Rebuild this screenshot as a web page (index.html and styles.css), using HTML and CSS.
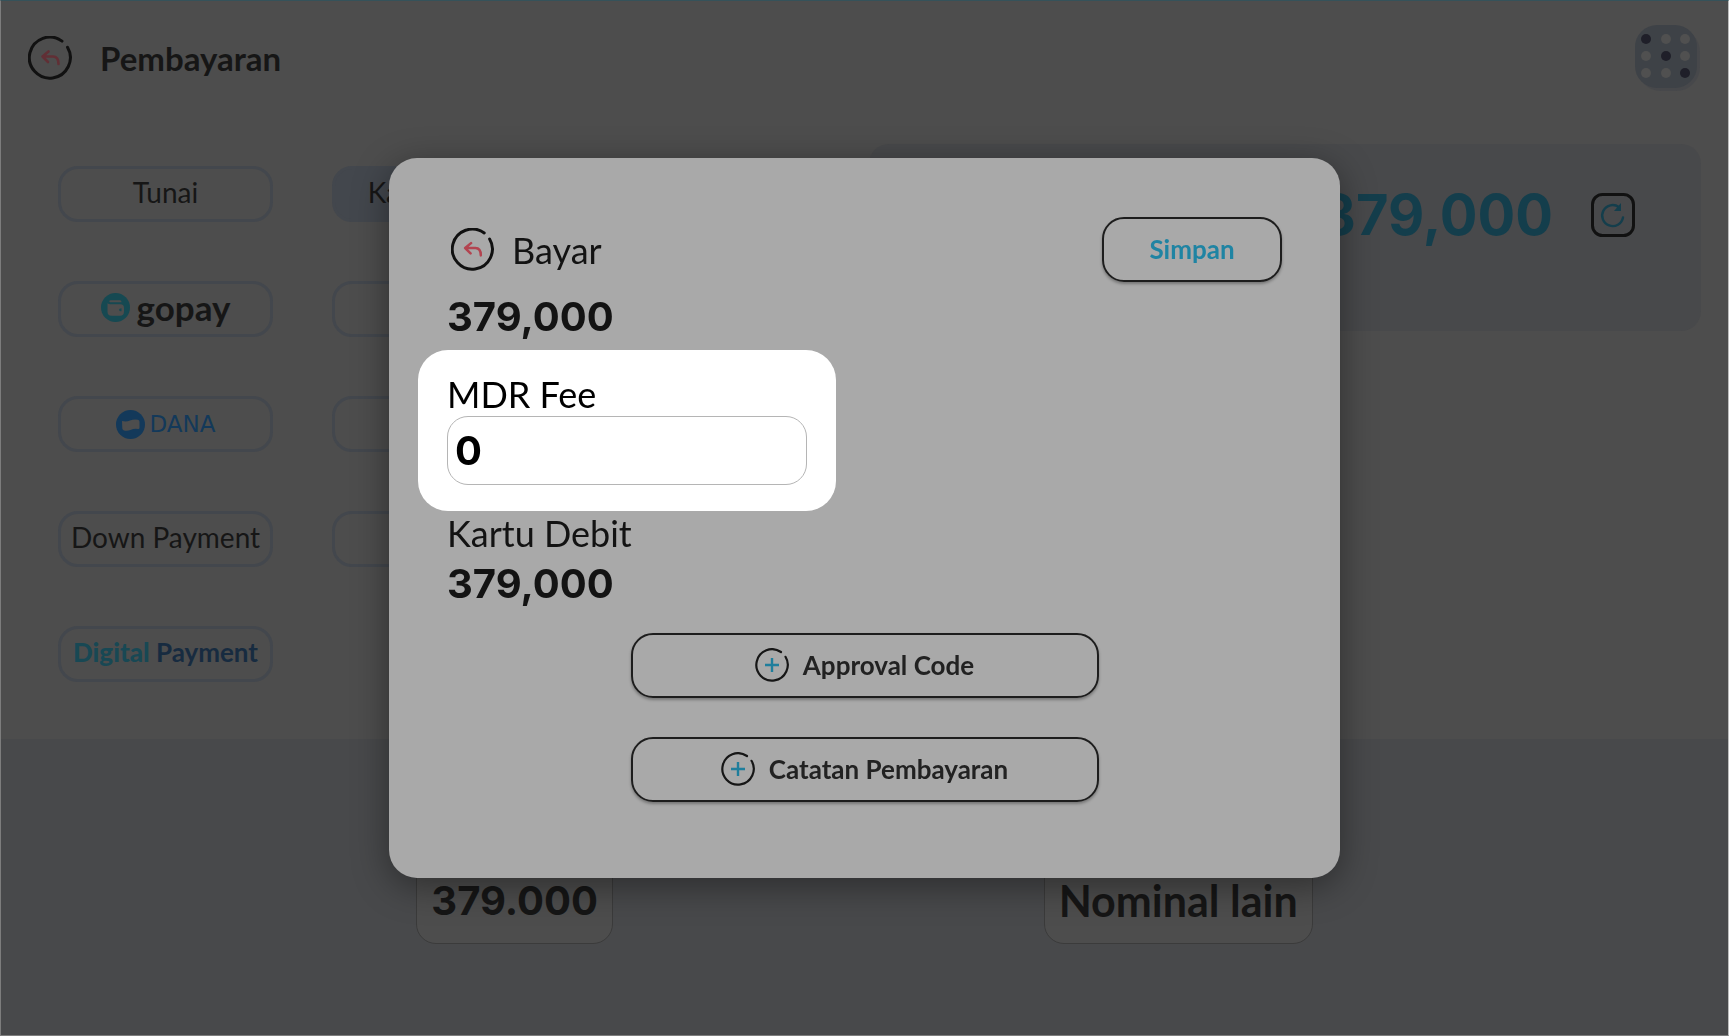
FILE: index.html
```html
<!DOCTYPE html>
<html lang="id">
<head>
  <meta charset="UTF-8">
  <meta name="viewport" content="width=device-width, initial-scale=1.0">
  <title>Pembayaran</title>
  <link rel="stylesheet" href="styles.css">
</head>
<body>

  <svg class="sprite" aria-hidden="true">
    <symbol id="icon-back" viewBox="0 0 44 44">
      <path d="M34 5.100A20.500 20.500 0 1 0 39.500 11.200" fill="none" stroke="#111" stroke-width="3" stroke-linecap="round"/>
      <path d="M20.500 15.500l-6 5 5.500 5.500M15 20.500h10q5.500 0 5.500 7.500" fill="none" stroke="currentColor" stroke-width="2.600" stroke-linecap="round" stroke-linejoin="round"/>
    </symbol>
    <symbol id="icon-plus" viewBox="0 0 34 34">
      <path d="M26 4A15.700 15.700 0 1 0 30.500 8.800" fill="none" stroke="#161616" stroke-width="2.200" stroke-linecap="round"/>
      <path d="M17 10v14M10 17h14" stroke="#1f7e9c" stroke-width="2.400"/>
    </symbol>
  </svg>

  <header class="topbar">
    <button class="icon-btn back" aria-label="Kembali"><svg><use href="#icon-back"/></svg></button>
    <h1>Pembayaran</h1>
    <button class="icon-btn apps" aria-label="Menu">
      <svg viewBox="0 0 66 66">
        <rect x="3" y="3" width="63" height="63" rx="24" fill="#47484b"/>
        <rect x="1" y="0" width="62" height="63" rx="22" fill="#3e4247"/>
        <g fill="#505050">
          <circle cx="32" cy="14" r="5"/><circle cx="51" cy="14" r="5"/>
          <circle cx="12" cy="31" r="5"/><circle cx="51" cy="31" r="5"/>
          <circle cx="12" cy="48" r="5"/><circle cx="32" cy="48" r="5"/>
        </g>
        <g fill="#1f1f29">
          <circle cx="12" cy="14" r="5"/><circle cx="32" cy="31" r="5"/><circle cx="51" cy="48" r="5"/>
        </g>
      </svg>
    </button>
  </header>

  <main class="content">
    <section class="methods">
      <button class="method">Tunai</button>
      <button class="method active">Kartu Debit</button>
      <button class="method gopay">
        <svg width="29" height="29" viewBox="0 0 29 29">
          <circle cx="14.500" cy="14.500" r="14.500" fill="#164952"/>
          <path d="M9.500 7.200h9.500q1.500 0 1.500 2H9.500q-1.200 0-1.200-1t1.200-1z" fill="#4d4d4d"/>
          <path d="M6.500 10.200q1 1 3 1h10q3.500 0 3.500 3.500v4q0 4-4 4H10.500q-4 0-4-4z" fill="#4d4d4d"/>
          <path d="M20.500 15.300q-2.500 0-2.500 1.500t2.500 1.500z" fill="#164952"/>
        </svg>
        <span>gopay</span>
      </button>
      <button class="method" aria-label="Dompet digital"></button>
      <button class="method dana">
        <svg width="29" height="29" viewBox="0 0 29 29">
          <circle cx="14.500" cy="14.500" r="14.500" fill="#13395a"/>
          <path d="M6 11q4 1.200 8-.5t8-.8q1.500.3 1.500 2v6q0 1.500-1.500 1.300-4-.6-7.500.9t-7 .3q-1-.4-1.200-1.700z" fill="#4d4d4d"/>
        </svg>
        <span>DANA</span>
      </button>
      <button class="method" aria-label="Dompet digital"></button>
      <button class="method">Down Payment</button>
      <button class="method" aria-label="Piutang"></button>
      <button class="method digital"><span><b>Digital</b> Payment</span></button>
    </section>

    <section class="summary">
      <strong>379,000</strong>
      <button class="icon-btn refresh" aria-label="Muat ulang">
        <svg viewBox="0 0 44 44">
          <rect x="1.500" y="1.500" width="41" height="41" rx="10" fill="none" stroke="#111" stroke-width="3"/>
          <path d="M28 14.200A10.500 10.500 0 1 0 32 24.500" fill="none" stroke="#143e4c" stroke-width="2.400" stroke-linecap="round"/>
          <path d="M30 10v8h-7z" fill="#143e4c"/>
        </svg>
      </button>
    </section>
  </main>

  <section class="nominals">
    <button class="nominal amount">379.000</button>
    <button class="nominal">Nominal lain</button>
  </section>

  <div class="backdrop">
    <form class="modal" role="dialog" aria-label="Bayar">
      <div class="modal-head">
        <button type="button" class="icon-btn back-small" aria-label="Kembali"><svg><use href="#icon-back"/></svg></button>
        <h2>Bayar</h2>
        <button type="submit" class="outline save">Simpan</button>
      </div>
      <p class="amount">379,000</p>

      <div class="spotlight">
        <label for="mdr">MDR Fee</label>
        <input class="amount" type="text" id="mdr" name="mdr" value="0">
      </div>

      <p class="method-name">Kartu Debit</p>
      <p class="amount">379,000</p>

      <div class="extras">
        <button type="button" class="outline"><svg><use href="#icon-plus"/></svg>Approval Code</button>
        <button type="button" class="outline"><svg><use href="#icon-plus"/></svg>Catatan Pembayaran</button>
      </div>
    </form>
  </div>

</body>
</html>
```
FILE: styles.css
```css
* {
  box-sizing: border-box;
}

body {
  margin: 0;
  min-height: 100vh;
  display: flex;
  flex-direction: column;
  font-family: Lato, sans-serif;
  color: #161616;
  background-color: #4d4d4d;
  border: 1px solid #7d7d7d;
  border-top-color: #35525a;
  border-right-color: #bdbdbd;
}

h1, h2, p {
  margin: 0;
}

button {
  font-family: inherit;
  color: inherit;
  background: none;
  border: none;
  padding: 0;
  cursor: pointer;
}

.sprite {
  position: absolute;
  width: 0;
  height: 0;
}

.icon-btn svg {
  display: block;
  width: 100%;
  height: 100%;
}

.amount {
  font-family: Inter, sans-serif;
  font-size: 40px;
  font-weight: 700;
  line-height: 50px;
}

/* topbar */
.topbar {
  display: flex;
  align-items: center;
  height: 114px;
  padding: 0 28px 0 27px;
}

.topbar h1 {
  margin-left: 28px;
  font-size: 33px;
  line-height: 40px;
}

.back {
  width: 44px;
  height: 44px;
  color: #612f35;
}

.apps {
  width: 66px;
  height: 66px;
  margin-left: auto;
}

/* metode pembayaran */
.content {
  display: grid;
  grid-template-columns: 1fr 1fr;
  align-items: start;
  flex: 1;
}

.methods {
  display: grid;
  grid-template-columns: 215px 215px;
  gap: 59px;
  padding: 51px 57px;
}

.method {
  display: flex;
  align-items: center;
  justify-content: center;
  height: 56px;
  padding-bottom: 4px;
  border: 3px solid #43474d;
  border-radius: 20px;
  font-size: 28px;
  white-space: nowrap;
}

.method.active {
  background-color: #43474d;
}

.gopay {
  gap: 7px;
  font-size: 35px;
  font-weight: 700;
}

.gopay span {
  line-height: 36px;
}

.dana {
  padding: 0;
  gap: 5px;
  font-family: "DejaVu Sans", sans-serif;
  font-size: 23px;
  color: #13395a;
}

.digital {
  font-size: 26px;
  font-weight: 700;
  color: #172b40;
}

.digital b {
  color: #184854;
}

.summary {
  display: flex;
  align-items: flex-start;
  justify-content: flex-end;
  gap: 38px;
  height: 187px;
  margin: 29px 27px 0 4px;
  padding: 49px 66px 0 0;
  border-radius: 20px;
  background-color: #48494b;
}

.summary strong {
  font-family: Inter, sans-serif;
  font-size: 56px;
  line-height: 44px;
  color: #143e4c;
}

.refresh {
  width: 44px;
  height: 44px;
}

.nominals {
  display: flex;
  align-items: flex-start;
  justify-content: space-around;
  height: 296px;
  padding: 120px 200px 0;
  background-color: #48494b;
}

.nominal {
  height: 85px;
  padding: 0 14px 2px;
  border: 1px solid #3b3b3b;
  border-radius: 20px;
  background-color: #4d4d4d;
  font-size: 43px;
  font-weight: 700;
}

.nominal.amount {
  font-size: 40px;
}

/* modal */
.backdrop {
  position: fixed;
  inset: 0;
  display: flex;
  align-items: center;
  justify-content: center;
}

.modal {
  width: 951px;
  padding: 59px 58px 76px;
  border-radius: 28px;
  background-color: #a9a9a9;
  box-shadow: 0 8px 36px rgba(0, 0, 0, 0.4);
  color: #131313;
}

.modal-head {
  display: flex;
  align-items: center;
  margin-bottom: 10px;
}

.modal-head h2,
.spotlight label,
.method-name {
  font-size: 36px;
  font-weight: 400;
  line-height: 44px;
}

.modal-head h2 {
  margin-left: 18px;
}

.method-name {
  margin-bottom: 4px;
}

.back-small {
  width: 43px;
  height: 43px;
  margin-left: 4px;
  color: #b34450;
}

.outline {
  display: flex;
  align-items: center;
  justify-content: center;
  gap: 14px;
  height: 65px;
  padding-bottom: 2px;
  border: 2px solid #1d1d1d;
  border-radius: 22px;
  box-shadow: 0 2px 3px rgba(0, 0, 0, 0.3);
  font-size: 26px;
  font-weight: 700;
  color: #222;
}

.outline svg {
  width: 34px;
  height: 34px;
}

.save {
  width: 180px;
  margin-left: auto;
  color: #1f84a3;
}

.spotlight {
  width: 418px;
  margin: 8px -29px 0;
  padding: 22px 29px 26px;
  border-radius: 30px;
  background-color: #fff;
  color: #000;
}

.spotlight label {
  display: block;
}

.spotlight input {
  display: block;
  width: 100%;
  height: 69px;
  padding: 0 7px;
  border: 1px solid #b5b5b5;
  border-radius: 21px;
  background-color: #fff;
  color: #000;
}

.spotlight input:focus {
  outline: none;
  border-color: #1f84a3;
}

.extras {
  display: grid;
  gap: 39px;
  width: 468px;
  margin: 24px auto 0;
}
```
